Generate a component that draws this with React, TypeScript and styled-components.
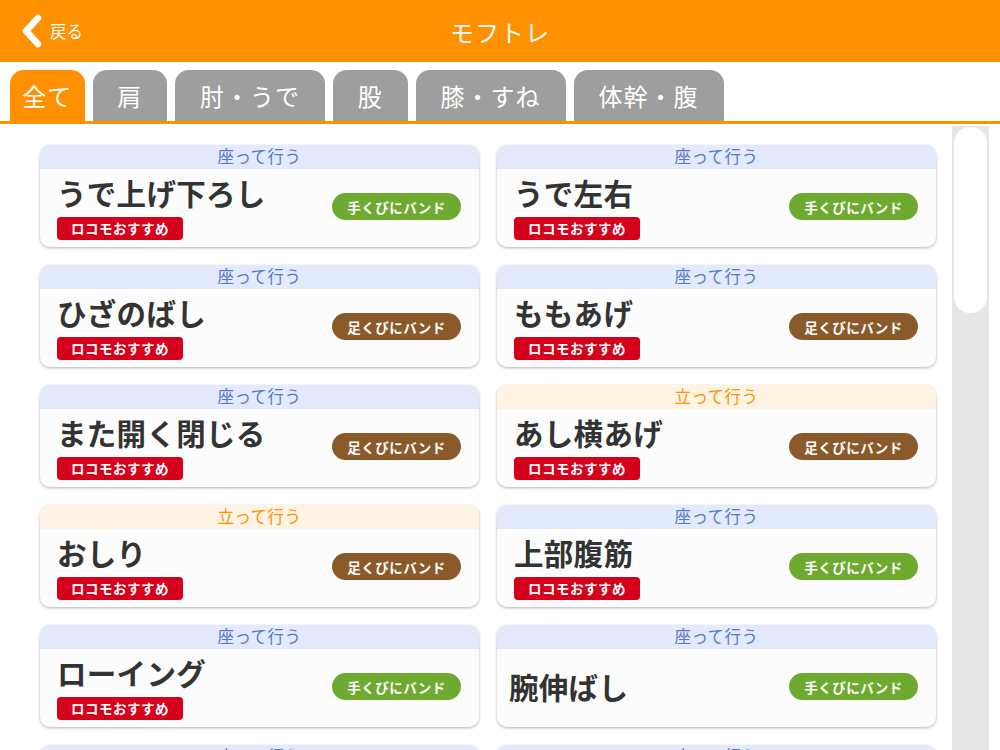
import React from "react";
import styled, { createGlobalStyle } from "styled-components";

const GlobalStyle = createGlobalStyle`
  html, body {
    margin: 0;
    padding: 0;
    height: 100%;
    overflow: hidden;
    background: #ffffff;
    font-family: "Noto Sans CJK JP", "Noto Sans", sans-serif;
  }
`;

const ORANGE = "#ff9100";

const Page = styled.div`
  width: 1000px;
  height: 750px;
  display: flex;
  flex-direction: column;
  overflow: hidden;
`;

const Header = styled.header`
  height: 62px;
  flex-shrink: 0;
  background: ${ORANGE};
  display: flex;
  align-items: center;
  position: relative;
  color: #fff;
`;

const BackButton = styled.div`
  display: flex;
  align-items: center;
  gap: 6px;
  padding-left: 20px;
  font-size: 16.5px;
  z-index: 1;
`;

const Title = styled.h1`
  position: absolute;
  left: 0;
  right: 0;
  margin: 0;
  text-align: center;
  font-size: 24px;
  font-weight: 400;
  letter-spacing: 1px;
`;

const TabBar = styled.nav`
  flex-shrink: 0;
  display: flex;
  gap: 8px;
  padding: 8px 0 0 10px;
  border-bottom: 3px solid ${ORANGE};
`;

const Tab = styled.div<{ active?: boolean; wide?: boolean }>`
  width: ${(p) => (p.wide ? "150px" : "74.5px")};
  height: 51px;
  border-radius: 14px 14px 0 0;
  background: ${(p) => (p.active ? ORANGE : "#9e9e9e")};
  color: #fff;
  font-size: 24px;
  display: flex;
  align-items: center;
  justify-content: center;
  letter-spacing: 1px;
`;

const Content = styled.div`
  flex: 1;
  display: flex;
  overflow: hidden;
`;

const CardGrid = styled.div`
  width: 912px;
  padding: 21px 0 0 40px;
  display: grid;
  grid-template-columns: 439px 439px;
  grid-auto-rows: 102px;
  gap: 18px;
  align-content: start;
`;

const ScrollTrack = styled.div`
  width: 33px;
  margin: 2px 0 0 0;
  padding: 1px 2px;
  background: #e6e6e6;
`;

const ScrollThumb = styled.div`
  height: 186px;
  background: #fff;
  border-radius: 16px;
`;

const Card = styled.div`
  border-radius: 10px;
  overflow: hidden;
  background: #fcfcfc;
  box-shadow: 0 1px 3px rgba(0, 0, 0, 0.3);
  display: flex;
  flex-direction: column;
`;

const Posture = styled.div<{ standing?: boolean }>`
  box-sizing: border-box;
  height: 24px;
  padding-bottom: 2px;
  flex-shrink: 0;
  background: ${(p) => (p.standing ? "#fff3e3" : "#e3eafd")};
  color: ${(p) => (p.standing ? ORANGE : "#5a7ac8")};
  font-size: 16.5px;
  line-height: 22px;
  text-align: center;
  letter-spacing: 0.5px;
`;

const CardBody = styled.div`
  flex: 1;
  display: flex;
  align-items: center;
  justify-content: space-between;
  padding: 0 18px 2px 16px;
`;

const NameBlock = styled.div`
  display: flex;
  flex-direction: column;
  align-items: flex-start;
`;

const Name = styled.div<{ solo?: boolean }>`
  font-size: 29.5px;
  font-weight: 700;
  line-height: 34px;
  letter-spacing: 0.3px;
  color: #333;
  margin: ${(p) => (p.solo ? "0 0 3px -4px" : "0 0 0 1px")};
`;

const LocoBadge = styled.div`
  margin: 8px 0 0 1px;
  width: 126px;
  height: 23px;
  border-radius: 4px;
  background: #d5001c;
  color: #fff;
  font-size: 13.5px;
  font-weight: 700;
  display: flex;
  align-items: center;
  justify-content: center;
  letter-spacing: 0.5px;
`;

const BandPill = styled.div<{ foot?: boolean }>`
  width: 129px;
  height: 27px;
  border-radius: 14px;
  background: ${(p) => (p.foot ? "#8a5a2b" : "#6eaa2f")};
  color: #fff;
  font-size: 13.5px;
  font-weight: 700;
  display: flex;
  align-items: center;
  justify-content: center;
  letter-spacing: 0.5px;
  margin-bottom: 1px;
`;

type Exercise = {
  name: string;
  standing?: boolean;
  foot?: boolean;
  loco?: boolean;
};

const exercises: Exercise[] = [
  { name: "うで上げ下ろし", loco: true },
  { name: "うで左右", loco: true },
  { name: "ひざのばし", foot: true, loco: true },
  { name: "ももあげ", foot: true, loco: true },
  { name: "また開く閉じる", foot: true, loco: true },
  { name: "あし横あげ", standing: true, foot: true, loco: true },
  { name: "おしり", standing: true, foot: true, loco: true },
  { name: "上部腹筋", loco: true },
  { name: "ローイング", loco: true },
  { name: "腕伸ばし" },
  { name: "ひじ曲げ", loco: true },
  { name: "胸ひらき", loco: true },
];

const tabs = [
  { label: "全て" },
  { label: "肩" },
  { label: "肘・うで", wide: true },
  { label: "股" },
  { label: "膝・すね", wide: true },
  { label: "体幹・腹", wide: true },
];

const BackChevron = () => (
  <svg width="24" height="34" viewBox="0 0 24 34">
    <polyline
      points="18,4 6,17 18,30"
      fill="none"
      stroke="#fff"
      strokeWidth="6.5"
      strokeLinecap="round"
      strokeLinejoin="round"
    />
  </svg>
);

const App = () => {
  return (
    <Page>
      <GlobalStyle />
      <Header>
        <BackButton>
          <BackChevron />
          <span>戻る</span>
        </BackButton>
        <Title>モフトレ</Title>
      </Header>

      <TabBar>
        {tabs.map((t, i) => (
          <Tab key={t.label} active={i === 0} wide={t.wide}>
            {t.label}
          </Tab>
        ))}
      </TabBar>

      <Content>
        <CardGrid>
          {exercises.map((ex) => (
            <Card key={ex.name}>
              <Posture standing={ex.standing}>
                {ex.standing ? "立って行う" : "座って行う"}
              </Posture>
              <CardBody>
                <NameBlock>
                  <Name solo={!ex.loco}>{ex.name}</Name>
                  {ex.loco && <LocoBadge>ロコモおすすめ</LocoBadge>}
                </NameBlock>
                <BandPill foot={ex.foot}>
                  {ex.foot ? "足くびにバンド" : "手くびにバンド"}
                </BandPill>
              </CardBody>
            </Card>
          ))}
        </CardGrid>
        <ScrollTrack>
          <ScrollThumb />
        </ScrollTrack>
      </Content>
    </Page>
  );
};

export default App;
